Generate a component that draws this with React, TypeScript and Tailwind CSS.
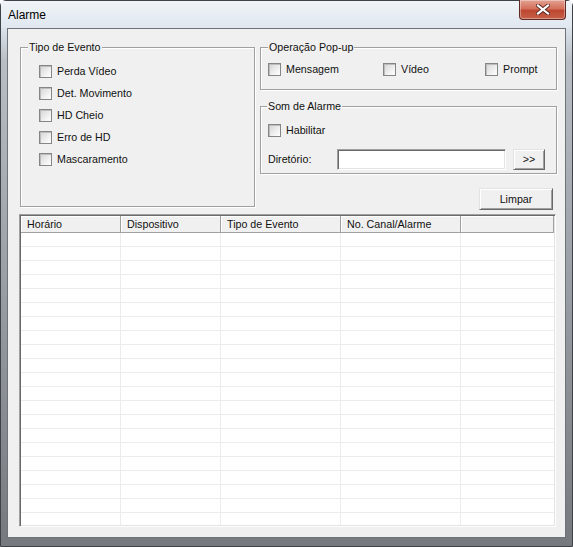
import React from 'react';

const font = { fontFamily: '"Liberation Sans", Arial, sans-serif' };

const Check: React.FC<{ label: string; className?: string }> = ({ label, className }) => (
  <div className={`flex h-[22px] items-center ${className ?? ''}`}>
    <div className="h-[13px] w-[13px] shrink-0 border border-[#858585] bg-[linear-gradient(135deg,#d4d4d4,#f4f4f4_70%,#ffffff)] shadow-[inset_1px_1px_0_#bcbcbc]" />
    <span className="ml-[5px] text-[10.7px] leading-[13px] text-[#111]">{label}</span>
  </div>
);

const Group: React.FC<{ title: string; labelLeft?: string; className?: string; children: React.ReactNode }> = ({
  title,
  labelLeft = 'left-[7px]',
  className,
  children,
}) => (
  <div className={`relative border border-[#a0a0a0] shadow-[inset_1px_1px_0_#fff,1px_1px_0_#fff] ${className ?? ''}`}>
    <span className={`absolute -top-[7px] ${labelLeft} bg-[#f0f0f0] px-px text-[10.7px] leading-[13px] text-[#111]`}>{title}</span>
    {children}
  </div>
);

const Button: React.FC<{ className?: string; children: React.ReactNode }> = ({ className, children }) => (
  <button
    className={`flex items-center justify-center border border-t-[#e3e3e3] border-l-[#e3e3e3] border-r-[#696969] border-b-[#696969] bg-[#f0f0f0] text-[10.7px] leading-[13px] text-[#111] shadow-[inset_1px_1px_0_#fff,inset_-1px_-1px_0_#a0a0a0] ${className ?? ''}`}
  >
    {children}
  </button>
);

const columns = [
  { title: 'Horário', w: 'w-[100px]' },
  { title: 'Dispositivo', w: 'w-[100px]' },
  { title: 'Tipo de Evento', w: 'w-[120px]' },
  { title: 'No. Canal/Alarme', w: 'w-[120px]' },
  { title: '', w: 'flex-1' },
];

const rows = Array.from({ length: 22 }, (_, i) => i);

export default function App() {
  return (
    <div style={font} className="h-[547px] w-[573px] overflow-hidden bg-white">
      <div className="flex h-[547px] w-[573px] flex-col rounded-t-[6px] border border-[#3f4348] bg-[linear-gradient(to_bottom,#e6ecf2_0px,#dde4ec_26px,#b9bec4_60px,#979ca2_300px,#767a7f_100%)] px-[6px] pb-[8px]">
        {/* title bar */}
        <div className="-mx-[6px] flex h-[27px] shrink-0 items-start justify-between bg-[linear-gradient(to_bottom,#f0f4f8,#e0e7ef)]">
          <span className="mt-[7px] pl-[7px] text-[12px] leading-[15px] text-black">Alarme</span>
          <div className="-mt-px mr-[6px] flex h-[20px] w-[47px] items-center justify-center rounded-b-[4px] border border-t-0 border-[#5d2a24] bg-[linear-gradient(to_bottom,#e3a192_0%,#d4705c_45%,#bd4731_55%,#c65f48_100%)] shadow-[inset_0_0_0_1px_rgba(255,255,255,0.35)]">
            <svg width="14" height="11" viewBox="0 0 14 11">
              <path d="M2 1.5 L12 9.5 M12 1.5 L2 9.5" stroke="#5a2a22" strokeWidth="4" strokeLinecap="square" />
              <path d="M2 1.5 L12 9.5 M12 1.5 L2 9.5" stroke="#ffffff" strokeWidth="2.2" strokeLinecap="square" />
            </svg>
          </div>
        </div>

        {/* client area */}
        <div className="flex h-[510px] w-[559px] flex-col border border-[#6e737a] bg-[#f0f0f0] pt-[18px]">
          <div className="flex pl-[12px]">
            {/* Tipo de Evento */}
            <Group title="Tipo de Evento" className="h-[160px] w-[235px]">
              <div className="flex flex-col pl-[18px] pt-[12px]">
                <Check label="Perda Vídeo" />
                <Check label="Det. Movimento" />
                <Check label="HD Cheio" />
                <Check label="Erro de HD" />
                <Check label="Mascaramento" />
              </div>
            </Group>

            <div className="ml-[5px] flex w-[297px] flex-col">
              <Group title="Operação Pop-up" className="h-[43px]">
                <div className="flex pl-[7px] pt-[10px]">
                  <Check label="Mensagem" className="w-[115px]" />
                  <Check label="Vídeo" className="w-[102px]" />
                  <Check label="Prompt" />
                </div>
              </Group>

              <Group title="Som de Alarme" labelLeft="left-[6px]" className="mt-[16px] h-[68px]">
                <div className="flex flex-col pl-[7px] pt-[12px]">
                  <Check label="Habilitar" />
                  <div className="mt-[8px] flex h-[21px] items-center">
                    <span className="w-[69px] text-[10.7px] leading-[13px] text-[#111]">Diretório:</span>
                    <div className="h-[21px] w-[169px] border border-t-[#a0a0a0] border-l-[#a0a0a0] border-r-white border-b-white bg-white shadow-[inset_1px_1px_0_#696969,inset_-1px_-1px_0_#e3e3e3]" />
                    <Button className="ml-[7px] h-[21px] w-[32px]">&gt;&gt;</Button>
                  </div>
                </div>
              </Group>

              <Button className="mr-[4px] mt-[14px] h-[22px] w-[74px] self-end">Limpar</Button>
            </div>
          </div>

          {/* event list */}
          <div className="ml-[11px] mt-[4px] flex h-[313px] w-[537px] flex-col overflow-hidden border border-t-[#a0a0a0] border-l-[#a0a0a0] border-r-white border-b-white bg-white shadow-[inset_1px_1px_0_#696969,inset_-1px_-1px_0_#e3e3e3] p-px">
            <div className="flex h-[17px] shrink-0">
              {columns.map((c, i) => (
                <div
                  key={i}
                  className={`${c.w} flex h-[17px] items-center border-b border-r border-[#a0a0a0] bg-[#f0f0f0] pl-[6px] text-[10.7px] leading-[13px] text-[#111] shadow-[inset_1px_1px_0_#fff]`}
                >
                  {c.title}
                </div>
              ))}
            </div>
            <div className="flex flex-col">
              {rows.map((r) => (
                <div key={r} className="flex h-[14px] shrink-0 border-b border-[#ececec]">
                  {columns.map((c, i) => (
                    <div key={i} className={`${c.w} h-full ${i < 4 ? 'border-r border-[#ececec]' : ''}`} />
                  ))}
                </div>
              ))}
            </div>
          </div>
        </div>
      </div>
    </div>
  );
}
